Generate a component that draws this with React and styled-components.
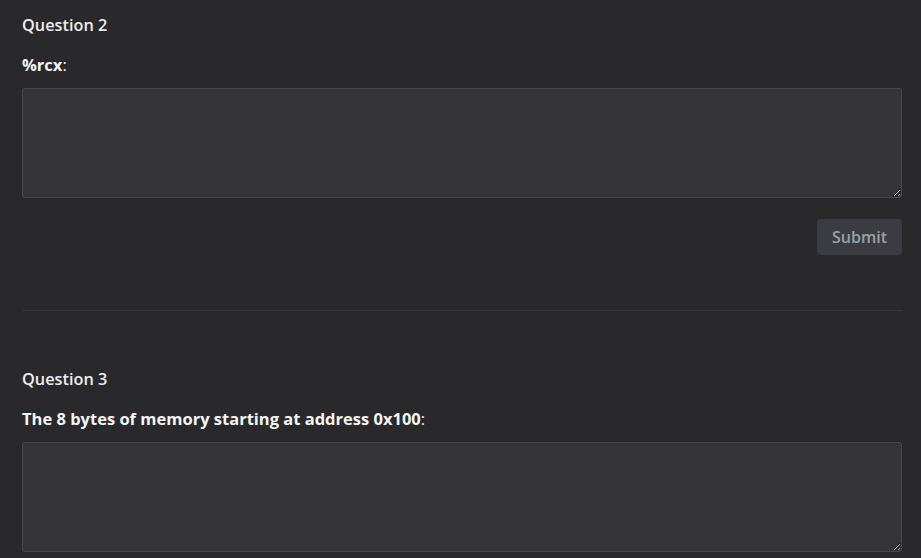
import styled, { createGlobalStyle } from "styled-components";

const Global = createGlobalStyle`
  body {
    margin: 0;
    background: #29292c;
    font-family: "Open Sans", "Liberation Sans", sans-serif;
    color: #ececee;
  }
`;

const Page = styled.div`
  padding: 13px 19px 0 22px;
`;

const Question = styled.section`
  padding-bottom: 55px;
  border-bottom: ${(p) => (p.last ? "none" : "1px solid #38383c")};
  & + & {
    padding-top: 56px;
  }
`;

const Title = styled.h3`
  margin: 0 0 16px;
  font-size: 16.3px;
  line-height: 24px;
  font-weight: 600;
  color: #ededee;
`;

const Label = styled.label`
  display: block;
  margin-bottom: 11px;
  font-size: 16.5px;
  line-height: 24px;
  color: #f4f4f5;
  b {
    font-weight: 700;
  }
`;

const Answer = styled.textarea`
  display: block;
  box-sizing: border-box;
  width: 100%;
  height: 110px;
  margin: 0;
  background: #353437;
  border: 1px solid #48484c;
  border-radius: 3px;
  color: #eee;
  font-family: inherit;
  font-size: 15px;
  resize: vertical;
  outline: none;
`;

const Actions = styled.div`
  display: flex;
  justify-content: flex-end;
  margin-top: 21px;
`;

const Submit = styled.button`
  height: 36px;
  padding: 0 15px;
  border: none;
  border-radius: 4px;
  background: #3b3c41;
  color: #9da0a7;
  font-family: inherit;
  font-size: 16px;
  font-weight: 600;
`;

const questions = [
  { n: 2, label: "%rcx" },
  { n: 3, label: "The 8 bytes of memory starting at address 0x100" },
];

export default function App() {
  return (
    <Page>
      <Global />
      {questions.map((q, i) => (
        <Question key={q.n} last={i === questions.length - 1}>
          <Title>Question {q.n}</Title>
          <Label>
            <b>{q.label}</b>:
          </Label>
          <Answer />
          <Actions>
            <Submit disabled>Submit</Submit>
          </Actions>
        </Question>
      ))}
    </Page>
  );
}
